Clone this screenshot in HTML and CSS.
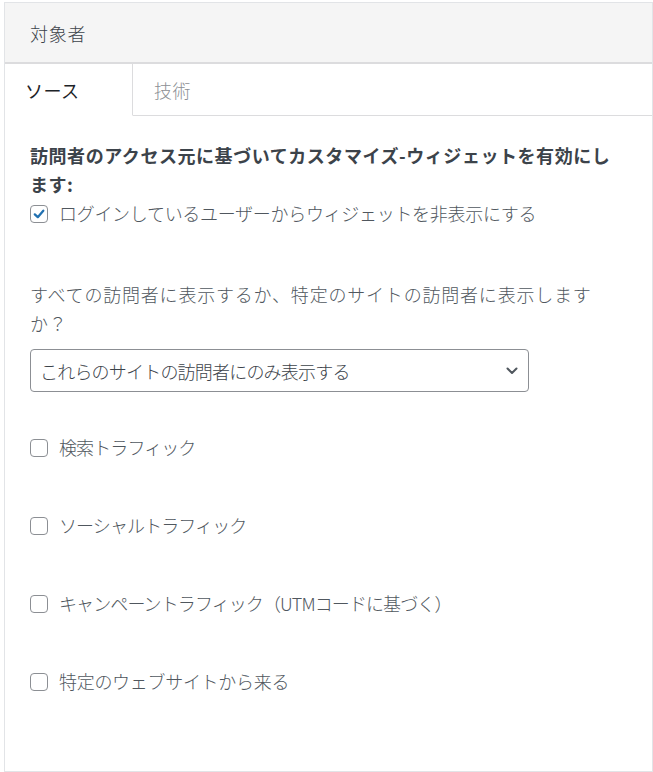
FILE: index.html
```html
<!DOCTYPE html>
<html lang="ja">
<head>
<meta charset="utf-8">
<link rel="stylesheet" href="styles.css">
</head>
<body>
<div class="panel">
  <div class="panel-head">対象者</div>
  <div class="tabs">
    <div class="tab active">ソース</div>
    <div class="tab">技術</div>
    <div class="tab-fill"></div>
  </div>
  <div class="content">
    <div class="heading">訪問者のアクセス元に基づいてカスタマイズ-ウィジェットを有効にします:</div>
    <label class="check first"><span class="box checked"><svg viewBox="0 0 16 16" width="14" height="14"><path d="M3.2 8.4 L6.6 11.6 L12.9 4.2" fill="none" stroke="#2271b1" stroke-width="2.6" stroke-linecap="round" stroke-linejoin="round"/></svg></span><span class="label-text">ログインしているユーザーからウィジェットを非表示にする</span></label>
    <p class="question">すべての訪問者に表示するか、特定のサイトの訪問者に表示しますか？</p>
    <div class="select">
      <span class="select-text">これらのサイトの訪問者にのみ表示する</span>
      <svg class="chev" viewBox="0 0 12 8" width="12" height="8"><path d="M1.5 1.5 L6 6 L10.5 1.5" fill="none" stroke="#50575e" stroke-width="2" stroke-linecap="round" stroke-linejoin="round"/></svg>
    </div>
    <div class="options">
      <label class="check"><span class="box"></span><span class="label-text opt">検索トラフィック</span></label>
      <label class="check"><span class="box"></span><span class="label-text opt">ソーシャルトラフィック</span></label>
      <label class="check"><span class="box"></span><span class="label-text opt">キャンペーントラフィック（UTMコードに基づく）</span></label>
      <label class="check"><span class="box"></span><span class="label-text">特定のウェブサイトから来る</span></label>
    </div>
  </div>
</div>
</body>
</html>
```
FILE: styles.css
```css
html, body {
  margin: 0;
  padding: 0;
  background: #ffffff;
}
body {
  padding: 2px 0 0 4px;
  font-family: "Noto Sans CJK JP", "Noto Sans", sans-serif;
  font-size: 18px;
  font-weight: 300;
  color: #50575e;
}
.panel {
  width: 647px;
  height: 768px;
  border: 1px solid #e2e4e7;
  box-sizing: content-box;
  display: flex;
  flex-direction: column;
}
.panel-head {
  height: 59px;
  background: #f5f5f5;
  border-bottom: 2px solid #dcdcde;
  box-sizing: content-box;
  padding-left: 25px;
  display: flex;
  align-items: center;
  font-size: 18px;
  color: #3c434a;
  letter-spacing: 0.8px;
}
.tabs {
  display: flex;
  height: 52px;
}
.tab {
  display: flex;
  align-items: center;
  padding: 0 22px 0 21px;
  font-size: 18px;
  color: #8c8f94;
  border-bottom: 1px solid #dcdcde;
  letter-spacing: 0.4px;
}
.tab.active {
  width: 128px;
  box-sizing: border-box;
  padding-left: 20px;
  color: #1d2327;
  font-weight: 400;
  border-right: 1px solid #dcdcde;
  border-bottom: 1px solid transparent;
}
.tab-fill {
  flex: 1;
  border-bottom: 1px solid #dcdcde;
}
.content {
  padding: 25px 0 0 25px;
  width: 595px;
}
.heading {
  font-weight: bold;
  color: #3c434a;
  line-height: 29px;
  letter-spacing: 0.55px;
}
.check {
  display: flex;
  align-items: center;
  height: 29px;
  gap: 11px;
}
.box {
  width: 16px;
  height: 16px;
  border: 1px solid #8c8f94;
  border-radius: 4px;
  background: #fff;
  display: flex;
  align-items: center;
  justify-content: center;
  flex: none;
}
.label-text {
  line-height: 29px;
  letter-spacing: -0.3px;
}
.label-text.opt {
  letter-spacing: -0.9px;
}
.question {
  margin: 52px 0 0;
  line-height: 29px;
  letter-spacing: 0.8px;
  width: 580px;
}
.select {
  margin-top: 11px;
  width: 499px;
  height: 43px;
  box-sizing: border-box;
  border: 1px solid #8c8f94;
  border-radius: 4px;
  display: flex;
  align-items: center;
  justify-content: space-between;
  padding: 0 10px 0 9px;
}
.select-text {
  color: #3c434a;
  letter-spacing: -0.8px;
}
.options {
  margin-top: 41px;
  display: flex;
  flex-direction: column;
  gap: 49px;
}
```
